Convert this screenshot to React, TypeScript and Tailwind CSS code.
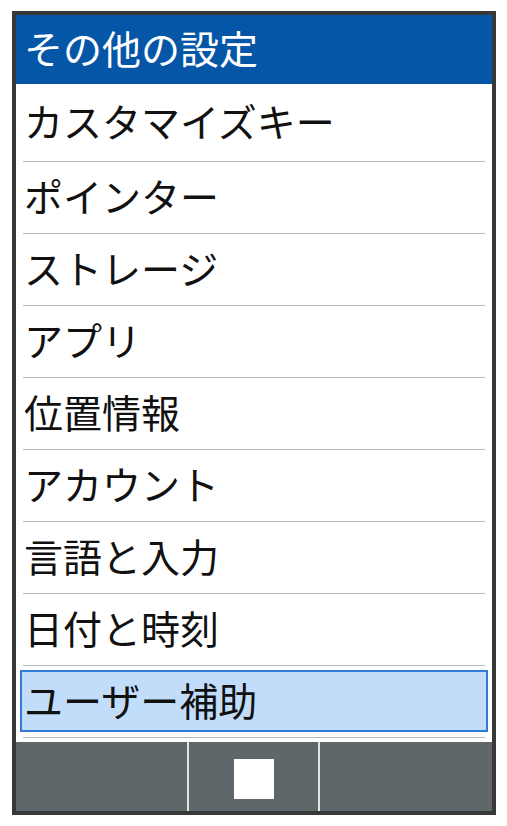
const items = [
  'カスタマイズキー',
  'ポインター',
  'ストレージ',
  'アプリ',
  '位置情報',
  'アカウント',
  '言語と入力',
  '日付と時刻',
]

export default function App() {
  return (
    <div className="w-[507px] h-[826px] bg-white pt-[11px] pl-[12px] font-['Noto_Sans_CJK_JP','Noto_Sans',sans-serif]">
      <div className="w-[484px] h-[804px] border-4 border-[#383838] flex flex-col">
        <div className="h-[69px] shrink-0 bg-[#0656a8] text-white text-[39px] leading-none flex items-center pl-[8px] pb-[4px]">
          その他の設定
        </div>
        <div className="flex-1 px-[7px] flex flex-col">
          {items.map((label, i) => (
            <div
              key={label}
              className={`${i === 0 ? 'h-[78px]' : 'h-[72px]'} shrink-0 border-b border-[#b6bbbb] flex items-center text-[39px] leading-none text-[#111] pl-[1px] pb-[4px]`}
            >
              {label}
            </div>
          ))}
          <div className="h-[72px] shrink-0 border-b border-[#b6bbbb] pt-[4px]">
            <div className="-mx-[3px] h-[62px] border-2 border-[#2f7bd6] bg-[#c2ddfa] flex items-center text-[39px] leading-none text-[#111] pl-[2px] pb-[4px]">
              ユーザー補助
            </div>
          </div>
        </div>
        <div className="h-[69px] shrink-0 bg-[#5f676b] flex">
          <div className="w-[171px]" />
          <div className="w-[2px] bg-[#e4e6e6]" />
          <div className="w-[129px] flex justify-center pt-[17px]">
            <div className="w-[40px] h-[40px] bg-white" />
          </div>
          <div className="w-[2px] bg-[#e4e6e6]" />
          <div className="flex-1" />
        </div>
      </div>
    </div>
  )
}
